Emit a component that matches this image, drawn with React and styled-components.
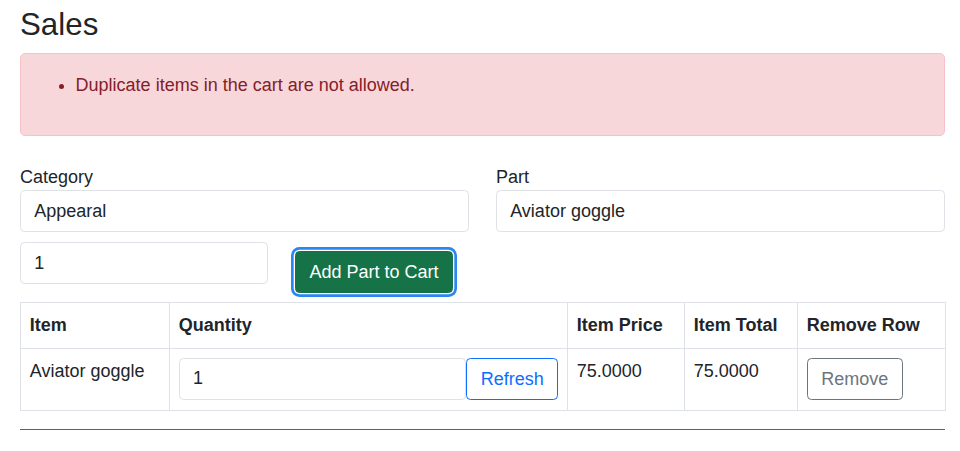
import React from "react";
import styled, { createGlobalStyle } from "styled-components";

const GlobalStyle = createGlobalStyle`
  html, body {
    margin: 0;
    padding: 0;
    background: #fff;
  }
  body {
    font-family: "Liberation Sans", Arial, sans-serif;
    font-size: 18px;
    line-height: 26.4px;
    color: #212529;
  }
  *, *::before, *::after { box-sizing: border-box; }
`;

const Page = styled.div`
  padding: 6px 15px 0 20px;
`;

const Title = styled.h2`
  margin: 0 0 8.8px;
  font-size: 31.3px;
  font-weight: 500;
  line-height: 38.4px;
  color: #212529;
`;

const Alert = styled.div`
  border: 1px solid #f5c2c7;
  background: #f8d7da;
  color: #842029;
  border-radius: 5px;
  padding: 17.6px 17.6px 19.6px 17.6px;
  margin-bottom: 27.5px;
`;

const ErrorList = styled.ul`
  margin: 0 0 17.6px;
  padding-left: 37px;
`;

const FieldGrid = styled.div`
  display: grid;
  grid-template-columns: 1fr 1fr;
  column-gap: 27px;
`;

const Field = styled.div`
  display: flex;
  flex-direction: column;
`;

const Label = styled.label`
  display: block;
  line-height: 26.4px;
`;

const Input = styled.input`
  display: block;
  width: ${(p) => p.$width || "100%"};
  height: 42px;
  padding: 6.6px 13.2px;
  font-family: inherit;
  font-size: 18px;
  line-height: 26.4px;
  color: #212529;
  background: #fff;
  border: 1px solid #dee2e6;
  border-radius: 4.5px;
  outline: none;
  flex: ${(p) => (p.$grow ? "1 1 auto" : "0 0 auto")};
  min-width: 0;
`;

const QtyRow = styled.div`
  display: flex;
  align-items: flex-start;
  column-gap: 27px;
  margin-top: 10px;
`;

const Button = styled.button`
  display: inline-block;
  height: 42px;
  padding: 6.6px 13.5px;
  font-family: inherit;
  font-size: 18px;
  line-height: 26.4px;
  border-radius: 4.5px;
  border: 1px solid ${(p) => p.$border};
  background: ${(p) => p.$bg || "transparent"};
  color: ${(p) => p.$color};
  cursor: pointer;
  flex: 0 0 auto;
  white-space: nowrap;
`;

const AddButton = styled(Button)`
  margin-top: 8.5px;
  box-shadow: 0 0 0 1.3px #fff, 0 0 0 4px #2c86f2;
`;

const Table = styled.table`
  width: 925px;
  margin-top: 9.5px;
  border-collapse: collapse;
  table-layout: fixed;
  vertical-align: top;
`;

const Th = styled.th`
  text-align: left;
  font-weight: 700;
  padding: 9px 8.8px 9px;
  border: 1px solid #dee2e6;
  vertical-align: top;
`;

const Td = styled.td`
  padding: 9px 8.8px 10px;
  border: 1px solid #dee2e6;
  vertical-align: top;
`;

const InputGroup = styled.div`
  display: flex;
  width: 100%;
`;

const Rule = styled.hr`
  border: 0;
  border-top: 1px solid #2a68d4;
  margin: 18px 0 0;
  width: 925px;
`;

export default function App() {
  return (
    <>
      <GlobalStyle />
      <Page>
        <Title>Sales</Title>
        <Alert>
          <ErrorList>
            <li>Duplicate items in the cart are not allowed.</li>
          </ErrorList>
        </Alert>
        <FieldGrid>
          <Field>
            <Label>Category</Label>
            <Input defaultValue="Appearal" />
          </Field>
          <Field>
            <Label>Part</Label>
            <Input defaultValue="Aviator goggle" />
          </Field>
        </FieldGrid>
        <QtyRow>
          <Input $width="248px" defaultValue="1" />
          <AddButton $bg="#157347" $border="#157347" $color="#fff">
            Add Part to Cart
          </AddButton>
        </QtyRow>
        <Table>
          <colgroup>
            <col style={{ width: 149 }} />
            <col style={{ width: 398 }} />
            <col style={{ width: 117 }} />
            <col style={{ width: 113 }} />
            <col style={{ width: 148 }} />
          </colgroup>
          <thead>
            <tr>
              <Th>Item</Th>
              <Th>Quantity</Th>
              <Th>Item Price</Th>
              <Th>Item Total</Th>
              <Th>Remove Row</Th>
            </tr>
          </thead>
          <tbody>
            <tr>
              <Td>Aviator goggle</Td>
              <Td>
                <InputGroup>
                  <Input $grow defaultValue="1" />
                  <Button $border="#0d6efd" $color="#0d6efd">
                    Refresh
                  </Button>
                </InputGroup>
              </Td>
              <Td>75.0000</Td>
              <Td>75.0000</Td>
              <Td>
                <Button $border="#6c757d" $color="#6c757d">
                  Remove
                </Button>
              </Td>
            </tr>
          </tbody>
        </Table>
        <Rule />
      </Page>
    </>
  );
}
